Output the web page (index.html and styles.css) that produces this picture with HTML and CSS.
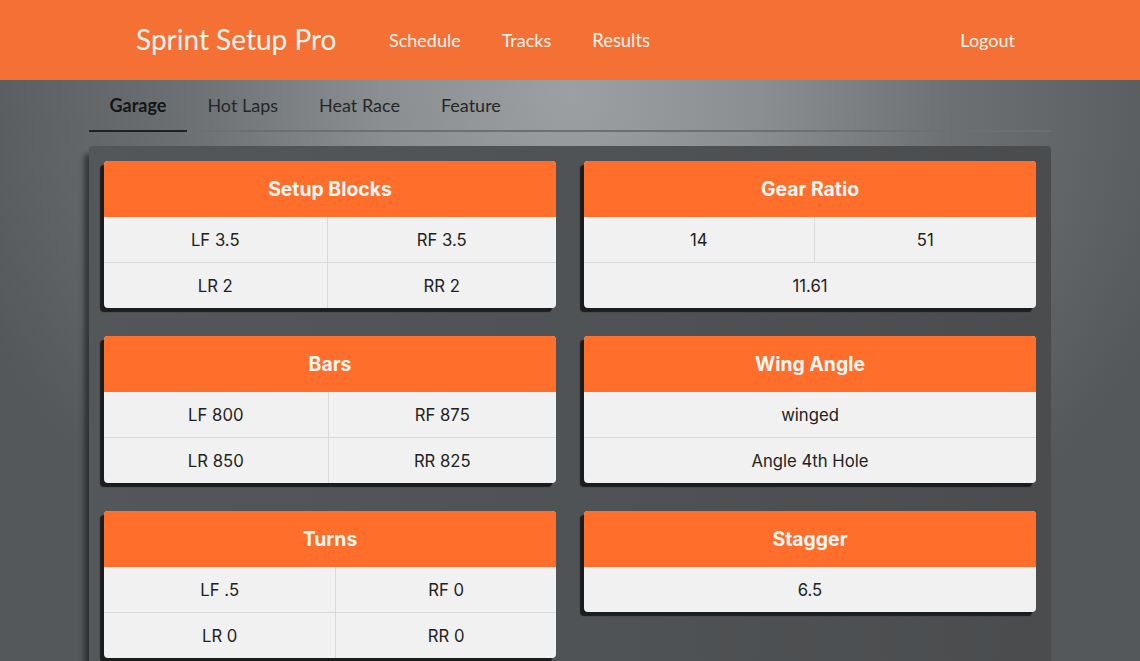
FILE: index.html
```html
<!DOCTYPE html>
<html lang="en">
<head>
<meta charset="utf-8">
<title>Sprint Setup Pro</title>
<link rel="stylesheet" href="styles.css">
</head>
<body>
<header class="topbar">
  <div class="topbar-inner">
    <a class="brand" href="#">Sprint Setup Pro</a>
    <nav class="mainnav">
      <a href="#">Schedule</a>
      <a href="#">Tracks</a>
      <a href="#">Results</a>
    </nav>
    <a class="logout" href="#">Logout</a>
  </div>
</header>

<main class="container">
  <ul class="tabs">
    <li class="tab active">Garage</li>
    <li class="tab">Hot Laps</li>
    <li class="tab">Heat Race</li>
    <li class="tab">Feature</li>
  </ul>

  <section class="panel">
    <div class="grid">
      <table class="card">
        <thead><tr><th colspan="2">Setup Blocks</th></tr></thead>
        <tbody>
          <tr><td>LF 3.5</td><td>RF 3.5</td></tr>
          <tr><td>LR 2</td><td>RR 2</td></tr>
        </tbody>
      </table>
      <table class="card">
        <thead><tr><th colspan="2">Gear Ratio</th></tr></thead>
        <tbody>
          <tr><td>14</td><td>51</td></tr>
          <tr><td colspan="2">11.61</td></tr>
        </tbody>
      </table>
      <table class="card">
        <thead><tr><th colspan="2">Bars</th></tr></thead>
        <tbody>
          <tr><td>LF 800</td><td>RF 875</td></tr>
          <tr><td>LR 850</td><td>RR 825</td></tr>
        </tbody>
      </table>
      <table class="card">
        <thead><tr><th>Wing Angle</th></tr></thead>
        <tbody>
          <tr><td>winged</td></tr>
          <tr><td>Angle 4th Hole</td></tr>
        </tbody>
      </table>
      <table class="card">
        <thead><tr><th colspan="2">Turns</th></tr></thead>
        <tbody>
          <tr><td>LF .5</td><td>RF 0</td></tr>
          <tr><td>LR 0</td><td>RR 0</td></tr>
        </tbody>
      </table>
      <table class="card">
        <thead><tr><th>Stagger</th></tr></thead>
        <tbody>
          <tr><td>6.5</td></tr>
        </tbody>
      </table>
    </div>
  </section>
</main>
</body>
</html>
```

FILE: styles.css
```css
html {
  min-height: 100%;
  background: radial-gradient(ellipse 640px 560px at 50% 14%, #9ca0a2 0%, #8a8e90 30%, #6c7073 60%, #55585b 100%);
  background-color: #55585b;
}

body {
  margin: 0;
  font-family: Lato, "Liberation Sans", sans-serif;
  min-height: 661px;
}

a {
  text-decoration: none;
  color: inherit;
}

.topbar {
  background: #f47034;
  height: 80px;
}

.topbar-inner {
  display: flex;
  align-items: center;
  height: 80px;
  padding: 0 125px 0 136px;
}

.brand {
  color: #fdf3ec;
  font-size: 28px;
  line-height: 34px;
  padding-bottom: 2px;
}

.mainnav {
  display: flex;
  margin-left: 32px;
}

.mainnav a {
  color: #fdf3ec;
  font-size: 18px;
  padding: 0 20.5px;
}

.mainnav a:last-child {
  font-size: 18.4px;
}

.logout {
  margin-left: auto;
  color: #fdf3ec;
  font-size: 18px;
}

.container {
  width: 962px;
  margin: 0 auto;
}

.tabs {
  list-style: none;
  margin: 0;
  padding: 0;
  display: flex;
  border-bottom: 2px solid #6c7073;
  height: 50px;
}

.tab {
  font-size: 18px;
  color: #262728;
  padding: 0 20.5px;
  line-height: 50px;
  margin-bottom: -2px;
  border-bottom: 2px solid transparent;
}

.tab.active {
  color: #151617;
  font-weight: 700;
  border-bottom-color: #1f2021;
}

.panel {
  margin-top: 14px;
  background: linear-gradient(90deg, #535759 0%, #505355 50%, #4a4c4e 100%);
  border-radius: 4px;
  box-shadow: -5px 8px 5px rgba(0, 0, 0, 0.45);
  padding: 15px 15px 20px;
}

.grid {
  display: grid;
  grid-template-columns: 1fr 1fr;
  column-gap: 28px;
  row-gap: 28px;
  align-items: start;
}

.card {
  width: 100%;
  border-collapse: collapse;
  font-family: Inter, "Liberation Sans", sans-serif;
  border-radius: 4px;
  box-shadow: -4px 4px 1px #1b1c1c;
  background: #f1f1f1;
  overflow: hidden;
}

.card th {
  background: #ff6e2b;
  color: #fbf7f4;
  font-size: 19.4px;
  font-weight: 700;
  height: 56px;
  padding: 0;
  text-align: center;
}

.card td {
  color: #222;
  font-size: 16.7px;
  text-align: center;
  height: 45px;
  padding: 0;
  border-top: 1px solid #d9d9d9;
  border-left: 1px solid #d9d9d9;
}

.card td:first-child {
  border-left: none;
}

.card tbody tr:first-child td {
  border-top: none;
}
```
